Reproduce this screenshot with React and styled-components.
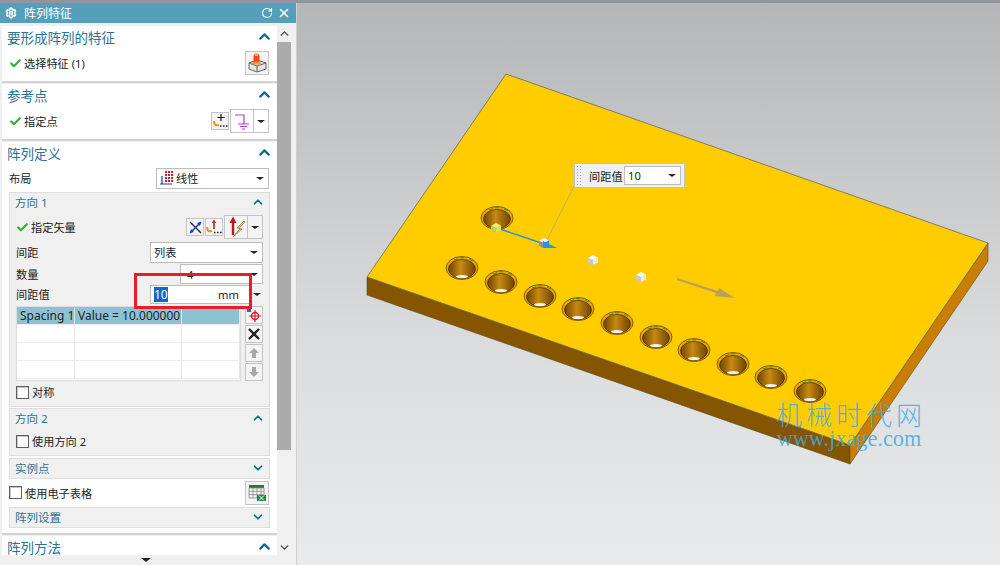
import React from "react";
import styled, { createGlobalStyle } from "styled-components";
import { Settings, RotateCw, X, ChevronUp, ChevronDown, Check } from "lucide-react";

const GlobalStyle = createGlobalStyle`
  html, body {
    margin: 0;
    padding: 0;
    overflow: hidden;
    background: #e9eaec;
  }
  * {
    box-sizing: border-box;
  }
`;

const Frame = styled.div`
  width: 1000px;
  height: 565px;
  border-top: 3px solid #8f979c;
  display: flex;
  font-family: "Noto Sans", "Noto Sans CJK SC", sans-serif;
  font-size: 11.2px;
  color: #222;
  overflow: hidden;
`;

const Panel = styled.div`
  position: relative;
  width: 297px;
  flex: none;
  display: flex;
  flex-direction: column;
  background: #f0f0f0;
  border-right: 1px solid #d0d0d0;
`;

const TitleBar = styled.div`
  height: 20px;
  flex: none;
  display: flex;
  align-items: center;
  padding: 0 5px 0 5px;
  gap: 7px;
  background: #559fba;
  color: #fff;
  font-size: 12px;
`;

const TitleText = styled.span`
  flex: 1;
`;

const TitleActions = styled.div`
  display: flex;
  align-items: center;
  gap: 4px;
`;

const Body = styled.div`
  height: 532px;
  flex: none;
  display: flex;
  padding: 3px 5px 0 2px;
  overflow: hidden;
`;

const Sections = styled.div`
  width: 275px;
  flex: none;
`;

const Section = styled.section`
  background: #fff;
  border-bottom: 2px solid #d2d2d2;
  margin-bottom: 1px;
  padding-bottom: ${(p) => p.$pad || 0}px;
`;

const SectionHeader = styled.div`
  height: 24px;
  display: flex;
  align-items: center;
  justify-content: space-between;
  padding: 0 4px 3px 5px;
  font-size: 13.5px;
  color: #2b7395;
`;

const Row = styled.div`
  height: ${(p) => p.$h}px;
  margin-top: ${(p) => p.$mt || 0}px;
  display: flex;
  align-items: center;
  padding: 0 ${(p) => p.$pr ?? 8}px ${(p) => p.$pb || 0}px ${(p) => p.$pl ?? 7}px;
`;

const Label = styled.span`
  flex: 1;
  white-space: nowrap;
`;

const CheckMark = styled(Check)`
  margin: 0 2px 0 0;
  flex: none;
  color: #35b035;
`;

const Group = styled.div`
  margin: ${(p) => p.$mt || 0}px 7px 0 7px;
  background: #f0f0f0;
  border: 1px solid #dedede;
  padding-bottom: ${(p) => p.$pb || 0}px;
`;

const GroupHeader = styled.div`
  height: ${(p) => p.$h || 20}px;
  display: flex;
  align-items: center;
  justify-content: space-between;
  padding: 0 4px 2px 5px;
  font-size: 11.5px;
  color: #2b7395;
`;

const ToolButton = styled.span`
  width: ${(p) => p.$w || 18}px;
  height: ${(p) => p.$h || 18}px;
  margin-left: ${(p) => p.$ml || 0}px;
  flex: none;
  display: inline-flex;
  align-items: center;
  justify-content: center;
  background: ${(p) => p.$bg || "#f4f4f4"};
  border: 1px solid #c4c4c4;
`;

const SplitArrow = styled.span`
  width: 15px;
  height: ${(p) => p.$h}px;
  flex: none;
  display: inline-flex;
  align-items: center;
  justify-content: center;
  background: ${(p) => p.$bg || "#f4f4f4"};
  border: 1px solid #c4c4c4;
  border-left: 0;
`;

const Caret = styled.i`
  display: block;
  flex: none;
  width: 0;
  height: 0;
  border-left: ${(p) => p.$s || 4}px solid transparent;
  border-right: ${(p) => p.$s || 4}px solid transparent;
  border-top: ${(p) => (p.$s || 4) - 1}px solid #222;
`;

const Select = styled.div`
  width: ${(p) => p.$w}px;
  height: ${(p) => p.$h}px;
  flex: none;
  display: flex;
  align-items: center;
  gap: 1px;
  padding: 0 4px 0 ${(p) => p.$pl ?? 3}px;
  background: #fff;
  border: 1px solid #bdbdbd;
`;

const SelectValue = styled.span`
  flex: 1;
  white-space: nowrap;
`;

const ValueInput = styled.div`
  width: 100px;
  height: 19px;
  flex: none;
  display: flex;
  align-items: center;
  justify-content: space-between;
  padding: 0 10px 0 3px;
  background: #fff;
  border: 1px solid #bdbdbd;
`;

const Selected = styled.span`
  background: #0a6cc4;
  color: #fff;
  font-size: 12px;
  line-height: 15px;
`;

const ArrowSlot = styled.span`
  width: 13px;
  flex: none;
  display: flex;
  justify-content: center;
`;

const TableArea = styled.div`
  display: flex;
  gap: 4px;
  margin: 2px 6px 0 6px;
`;

const Table = styled.div`
  width: 225px;
  height: 75px;
  flex: none;
  border: 1px solid #dcdcdc;
  background: #fff;
  font-size: 12px;
`;

const TableRow = styled.div`
  height: 18px;
  display: grid;
  grid-template-columns: 58px 107px 1fr;
  background: ${(p) => (p.$head ? "#8cc3d3" : "#fff")};
  border-bottom: 1px solid #ececec;
  white-space: nowrap;
`;

const Cell = styled.div`
  padding-left: 3px;
  line-height: 17px;
  border-right: 1px solid #e6e6e6;
`;

const TableTools = styled.div`
  display: flex;
  flex-direction: column;
  gap: 1px;
`;

const CheckBox = styled.span`
  width: 13px;
  height: 13px;
  flex: none;
  margin-right: 3px;
  background: #fff;
  border: 1px solid #5f5f5f;
  box-shadow: inset 1px 1px 0 #c8c8c8;
`;

const Scrollbar = styled.div`
  width: 14px;
  flex: none;
  height: 100%;
  display: flex;
  flex-direction: column;
  align-items: center;
  padding-top: 1px;
  color: #444;
`;

const Thumb = styled.div`
  width: 14px;
  height: 408px;
  margin-top: 2px;
  background: #ababab;
`;

const ScrollEnd = styled.div`
  margin-top: auto;
  padding-bottom: 1px;
  display: flex;
`;

const BottomStrip = styled.div`
  flex: 1;
  display: flex;
  align-items: center;
  justify-content: center;
  padding-right: 5px;
`;

const RedFrame = styled.div`
  position: absolute;
  left: 134px;
  top: 270px;
  width: 118px;
  height: 36px;
  border: 3px solid #ed1c24;
`;

const Viewport = styled.div`
  position: relative;
  flex: 1;
  background: linear-gradient(#b5b6b8 0%, #c8c9cb 30%, #dcddde 62%, #e9eaec 100%);
`;

const ModelDrawing = styled.svg`
  display: block;
  width: 703px;
  height: 562px;
`;

const Callout = styled.div`
  position: absolute;
  left: 277px;
  top: 160px;
  width: 111px;
  height: 25px;
  display: flex;
  align-items: center;
  background: #f0f0f0;
  border: 1px solid #b9c3ca;
`;

const Grip = styled.span`
  width: 6px;
  height: 21px;
  margin: 0 7px 0 1px;
  flex: none;
  background-image: radial-gradient(#a9a9a9 1px, transparent 1px);
  background-size: 3px 3px;
`;

const CalloutLabel = styled.span`
  flex: none;
  width: 35px;
  white-space: nowrap;
`;

const Watermark = styled.div`
  position: absolute;
  right: 78px;
  top: 396px;
  width: 146px;
  color: rgba(64, 170, 232, 0.85);
  text-align: center;
`;

const WatermarkTitle = styled.div`
  font-family: "Noto Sans CJK SC", sans-serif;
  font-weight: 300;
  font-size: 26px;
  line-height: 30px;
  letter-spacing: 4px;
  white-space: nowrap;
`;

const WatermarkUrl = styled.div`
  font-family: "Liberation Serif", serif;
  font-size: 22.3px;
  line-height: 20px;
  white-space: nowrap;
`;

const Chevron = ({ up }) => {
  const Icon = up ? ChevronUp : ChevronDown;
  return <Icon size={17} strokeWidth={3} color="#0f6a8e" />;
};

const SmallChevron = ({ up }) => {
  const Icon = up ? ChevronUp : ChevronDown;
  return <Icon size={14} strokeWidth={3} color="#0f6a8e" />;
};

const FeatureIcon = () => (
  <svg width="22" height="22" viewBox="0 0 22 22">
    <path d="M3 11 L11 8 L20 11 L20 17 L11 20 L3 17 Z" fill="#e4e4e4" stroke="#666" />
    <path d="M3 11 L11 14 L20 11 M11 14 V20" fill="none" stroke="#666" />
    <rect x="7.5" y="2" width="6" height="9" rx="2" fill="#f5422a" />
    <rect x="9" y="1" width="3" height="3" fill="#ffb52e" />
    <ellipse cx="10.5" cy="11" rx="4.5" ry="1.6" fill="#f59a1f" />
  </svg>
);

const PointIcon = () => (
  <svg width="16" height="16" viewBox="0 0 16 16">
    <path d="M9 1 V8 M5.5 4.5 H12.5" stroke="#111" strokeWidth="1.2" />
    <path d="M2 8 C2 12 4 13 7 12" fill="none" stroke="#e8941a" strokeWidth="2" />
    <path d="M8 13 h1.5 M11 13 h1.5 M14 13 h1.5" stroke="#222" strokeWidth="1.3" />
  </svg>
);

const PurplePointIcon = () => (
  <svg width="18" height="18" viewBox="0 0 18 18">
    <path d="M2 3 H11 V12 M5 12 H16 M7 14.5 H14 M9 17 H12" fill="none" stroke="#b43cc8" strokeWidth="1.2" />
  </svg>
);

const LinearIcon = () => (
  <svg width="15" height="16" viewBox="0 0 15 16">
    {[5, 8, 11].map((x) =>
      [1, 4, 7, 10].map((y) => <rect key={`${x}-${y}`} x={x} y={y} width="2" height="2" fill="#c8202c" />)
    )}
    <path d="M2 6 V14 H12 M0 14 H3" fill="none" stroke="#2438b0" strokeWidth="1.2" />
  </svg>
);

const ReverseIcon = () => (
  <svg width="15" height="15" viewBox="0 0 15 15">
    <path d="M2 2 L13 13" stroke="#222" strokeWidth="1.2" />
    <path d="M2 13 L13 2" stroke="#1440c8" strokeWidth="1.6" />
    <path d="M13 2 L9 3 L12 6 Z M2 13 L6 12 L3 9 Z" fill="#1440c8" />
  </svg>
);

const VectorPointIcon = () => (
  <svg width="16" height="16" viewBox="0 0 16 16">
    <path d="M8 10 V2" stroke="#c81e1e" strokeWidth="1.6" />
    <path d="M8 0.5 L5.8 4 H10.2 Z" fill="#c81e1e" />
    <path d="M1 8 C1 12 3 13 6 12" fill="none" stroke="#e8941a" strokeWidth="2" />
    <path d="M8 13.5 h1.5 M11 13.5 h1.5 M14 13.5 h1.5" stroke="#222" strokeWidth="1.3" />
  </svg>
);

const VectorIcon = () => (
  <svg width="22" height="24" viewBox="0 0 22 24">
    <path d="M8 20 V6" stroke="#c01818" strokeWidth="2.4" />
    <path d="M8 1.5 L4.5 8 H11.5 Z" fill="#c01818" />
    <path d="M19 6 L12 13 L15 13.5 L8 22 L17 14 L14 13.5 L20 7 Z" fill="#f0c63c" stroke="#777" strokeWidth="0.7" />
  </svg>
);

const AddRowIcon = () => (
  <svg width="16" height="16" viewBox="0 0 16 16">
    <circle cx="9" cy="9" r="3.5" fill="none" stroke="#d81e28" strokeWidth="1.4" />
    <path d="M9 3 V15 M3 9 H15" stroke="#d81e28" strokeWidth="1.2" />
    <rect x="1" y="1" width="4" height="4" fill="#1c66d8" />
  </svg>
);

const DeleteIcon = () => (
  <svg width="14" height="14" viewBox="0 0 14 14">
    <path d="M2 2 L12 12 M12 2 L2 12" stroke="#222" strokeWidth="2.4" />
  </svg>
);

const MoveIcon = ({ down }) => (
  <svg width="12" height="12" viewBox="0 0 12 12">
    <path d={down ? "M4 1 H8 V6 H11 L6 11 L1 6 H4 Z" : "M4 11 H8 V6 H11 L6 1 L1 6 H4 Z"} fill="#a8a8a8" />
  </svg>
);

const SheetIcon = () => (
  <svg width="20" height="20" viewBox="0 0 20 20">
    <rect x="2" y="2" width="15" height="3" fill="#1c7a3c" />
    <path d="M2 5 H17 V15 H2 Z M2 8.3 H17 M2 11.6 H17 M6 5 V15 M10 5 V15 M14 5 V15" fill="#f4f4f4" stroke="#8a8a8a" strokeWidth="0.8" />
    <path d="M10 12 H19 V18 H10 Z" fill="#1c8a44" />
    <path d="M12 12.5 L17 17.5 M17 12.5 L12 17.5" stroke="#fff" strokeWidth="1" />
  </svg>
);

// holes along the front edge of the plate, in page coordinates
const HOLES = [
  [462, 268],
  [501, 282],
  [540, 296],
  [578, 309],
  [617, 323],
  [656, 337],
  [694, 350],
  [733, 364],
  [771, 377],
  [810, 391],
];

const Hole = ({ x, y, through }) => (
  <g>
    <ellipse cx={x} cy={y} rx="16" ry="11.5" fill="#f0a400" stroke="#4a3a10" strokeWidth="0.7" />
    <path
      d={`M${x - 8} ${y - 8} l4 -1.2 M${x - 2} ${y - 10.2} h4 M${x + 7} ${y - 9} l4 2`}
      stroke="#2f9a3a"
      strokeWidth="1"
      fill="none"
    />
    <ellipse cx={x} cy={y + 1} rx="13.5" ry="9.5" fill="url(#holeWall)" stroke="#3c2a08" strokeWidth="0.7" />
    {through && <ellipse cx={x} cy={y + 8.6} rx="6" ry="1.7" fill="#f4f4f4" />}
  </g>
);

const Cube = ({ x, y, top, left, right }) => (
  <g>
    <path d={`M${x - 5} ${y - 2} L${x} ${y - 5} L${x + 5} ${y - 2.5} L${x} ${y} Z`} fill={top} />
    <path d={`M${x - 5} ${y - 2} L${x} ${y} V${y + 5} L${x - 5} ${y + 3} Z`} fill={left} />
    <path d={`M${x} ${y} L${x + 5} ${y - 2.5} V${y + 2.5} L${x} ${y + 5} Z`} fill={right} />
  </g>
);

const Model = () => (
  <ModelDrawing viewBox="297 3 703 562">
    <defs>
      <linearGradient id="holeWall" x1="0" x2="1" y1="0" y2="0">
        <stop offset="0" stopColor="#6d4400" />
        <stop offset="0.45" stopColor="#c98a12" />
        <stop offset="1" stopColor="#6d4400" />
      </linearGradient>
    </defs>
    <polygon points="367,277 850,445 850,464 367,295" fill="#855500" stroke="#5c4a20" strokeWidth="0.6" />
    <polygon points="850,445 988,243 988,261 850,464" fill="#c97e00" stroke="#5c4a20" strokeWidth="0.6" />
    <polygon points="506,74 988,243 850,445 367,277" fill="#ffcc00" stroke="#6a6a5a" strokeWidth="0.8" />
    <Hole x={497} y={218} />
    {HOLES.map(([x, y]) => (
      <Hole key={x} x={x} y={y} through />
    ))}
    <line x1="574" y1="186" x2="547" y2="240" stroke="#b5a870" strokeWidth="0.8" />
    <line x1="497" y1="228" x2="550" y2="246" stroke="#1e9be0" strokeWidth="1.5" />
    <Cube x={496} y={228} top="#f2ee80" left="#c8c85a" right="#e0dc60" />
    <Cube x={544} y={243} top="#ffffff" left="#8a93a0" right="#2a8fd8" />
    <polygon points="543,241 557,248 543,248" fill="#1e9be0" />
    <Cube x={593} y={260} top="#ffffff" left="#c9c9c9" right="#e9e9e9" />
    <Cube x={641} y={277} top="#ffffff" left="#c9c9c9" right="#e9e9e9" />
    <polygon points="677,278 718,291 719,288 735,298 715,296 716,293 677,280" fill="#b8a15c" />
  </ModelDrawing>
);

function App() {
  return (
    <>
      <GlobalStyle />
      <Frame>
        <Panel>
          <TitleBar>
            <Settings size={12} strokeWidth={3} />
            <TitleText>阵列特征</TitleText>
            <TitleActions>
              <RotateCw size={12} strokeWidth={2.4} />
              <X size={14} strokeWidth={2.6} />
            </TitleActions>
          </TitleBar>
          <Body>
            <Sections>
              <Section>
                <SectionHeader>
                  要形成阵列的特征
                  <Chevron up />
                </SectionHeader>
                <Row $h={31} $pb={5}>
                  <CheckMark size={13} strokeWidth={4} />
                  <Label>选择特征 (1)</Label>
                  <ToolButton $w={24} $h={24}>
                    <FeatureIcon />
                  </ToolButton>
                </Row>
              </Section>
              <Section>
                <SectionHeader>
                  参考点
                  <Chevron up />
                </SectionHeader>
                <Row $h={31} $pb={5}>
                  <CheckMark size={13} strokeWidth={4} />
                  <Label>指定点</Label>
                  <ToolButton>
                    <PointIcon />
                  </ToolButton>
                  <ToolButton $w={24} $h={24} $ml={1} $bg="#fff">
                    <PurplePointIcon />
                  </ToolButton>
                  <SplitArrow $h={24} $bg="#fff">
                    <Caret />
                  </SplitArrow>
                </Row>
              </Section>
              <Section $pad={5}>
                <SectionHeader>
                  阵列定义
                  <Chevron up />
                </SectionHeader>
                <Row $h={24}>
                  <Label>布局</Label>
                  <Select $w={113} $h={21}>
                    <LinearIcon />
                    <SelectValue>线性</SelectValue>
                    <Caret />
                  </Select>
                </Row>
                <Group $mt={2} $pb={3}>
                  <GroupHeader>
                    方向 1
                    <SmallChevron up />
                  </GroupHeader>
                  <Row $h={28} $pl={6} $pr={6}>
                    <CheckMark size={13} strokeWidth={4} />
                    <Label>指定矢量</Label>
                    <ToolButton>
                      <ReverseIcon />
                    </ToolButton>
                    <ToolButton $ml={1}>
                      <VectorPointIcon />
                    </ToolButton>
                    <ToolButton $w={24} $h={24} $ml={1}>
                      <VectorIcon />
                    </ToolButton>
                    <SplitArrow $h={24}>
                      <Caret />
                    </SplitArrow>
                  </Row>
                  <Row $h={22} $pl={6} $pr={6}>
                    <Label>间距</Label>
                    <Select $w={113} $h={21}>
                      <SelectValue>列表</SelectValue>
                      <Caret />
                    </Select>
                  </Row>
                  <Row $h={20} $mt={1} $pl={6} $pr={6}>
                    <Label>数量</Label>
                    <Select $w={83} $h={20} $pl={6}>
                      <SelectValue>4</SelectValue>
                      <Caret />
                    </Select>
                  </Row>
                  <Row $h={20} $pl={6} $pr={6}>
                    <Label>间距值</Label>
                    <ValueInput>
                      <Selected>10</Selected>
                      <span>mm</span>
                    </ValueInput>
                    <ArrowSlot>
                      <Caret />
                    </ArrowSlot>
                  </Row>
                  <TableArea>
                    <Table>
                      <TableRow $head>
                        <Cell>Spacing 1</Cell>
                        <Cell>Value = 10.000000</Cell>
                        <Cell />
                      </TableRow>
                      {[1, 2, 3].map((n) => (
                        <TableRow key={n}>
                          <Cell />
                          <Cell />
                          <Cell />
                        </TableRow>
                      ))}
                    </Table>
                    <TableTools>
                      <ToolButton>
                        <AddRowIcon />
                      </ToolButton>
                      <ToolButton>
                        <DeleteIcon />
                      </ToolButton>
                      <ToolButton>
                        <MoveIcon />
                      </ToolButton>
                      <ToolButton>
                        <MoveIcon down />
                      </ToolButton>
                    </TableTools>
                  </TableArea>
                  <Row $h={22} $pl={6} $pr={6}>
                    <CheckBox />
                    <Label>对称</Label>
                  </Row>
                </Group>
                <Group $mt={1} $pb={2}>
                  <GroupHeader>
                    方向 2
                    <SmallChevron up />
                  </GroupHeader>
                  <Row $h={24} $pl={6} $pr={6}>
                    <CheckBox />
                    <Label>使用方向 2</Label>
                  </Row>
                </Group>
                <Group $mt={2}>
                  <GroupHeader $h={19}>
                    实例点
                    <SmallChevron />
                  </GroupHeader>
                </Group>
                <Row $h={27} $mt={1} $pb={2}>
                  <CheckBox />
                  <Label>使用电子表格</Label>
                  <ToolButton $w={24} $h={24}>
                    <SheetIcon />
                  </ToolButton>
                </Row>
                <Group>
                  <GroupHeader $h={19}>
                    阵列设置
                    <SmallChevron />
                  </GroupHeader>
                </Group>
              </Section>
              <Section>
                <SectionHeader>
                  阵列方法
                  <Chevron up />
                </SectionHeader>
              </Section>
            </Sections>
            <Scrollbar>
              <ChevronUp size={13} strokeWidth={2.4} />
              <Thumb />
              <ScrollEnd>
                <ChevronDown size={13} strokeWidth={2.4} />
              </ScrollEnd>
            </Scrollbar>
          </Body>
          <BottomStrip>
            <Caret $s={5} />
          </BottomStrip>
          <RedFrame />
        </Panel>
        <Viewport>
          <Model />
          <Callout>
            <Grip />
            <CalloutLabel>间距值</CalloutLabel>
            <Select $w={57} $h={19}>
              <SelectValue>10</SelectValue>
              <Caret />
            </Select>
          </Callout>
          <Watermark>
            <WatermarkTitle>机械时代网</WatermarkTitle>
            <WatermarkUrl>www.jxage.com</WatermarkUrl>
          </Watermark>
        </Viewport>
      </Frame>
    </>
  );
}

export default App;
